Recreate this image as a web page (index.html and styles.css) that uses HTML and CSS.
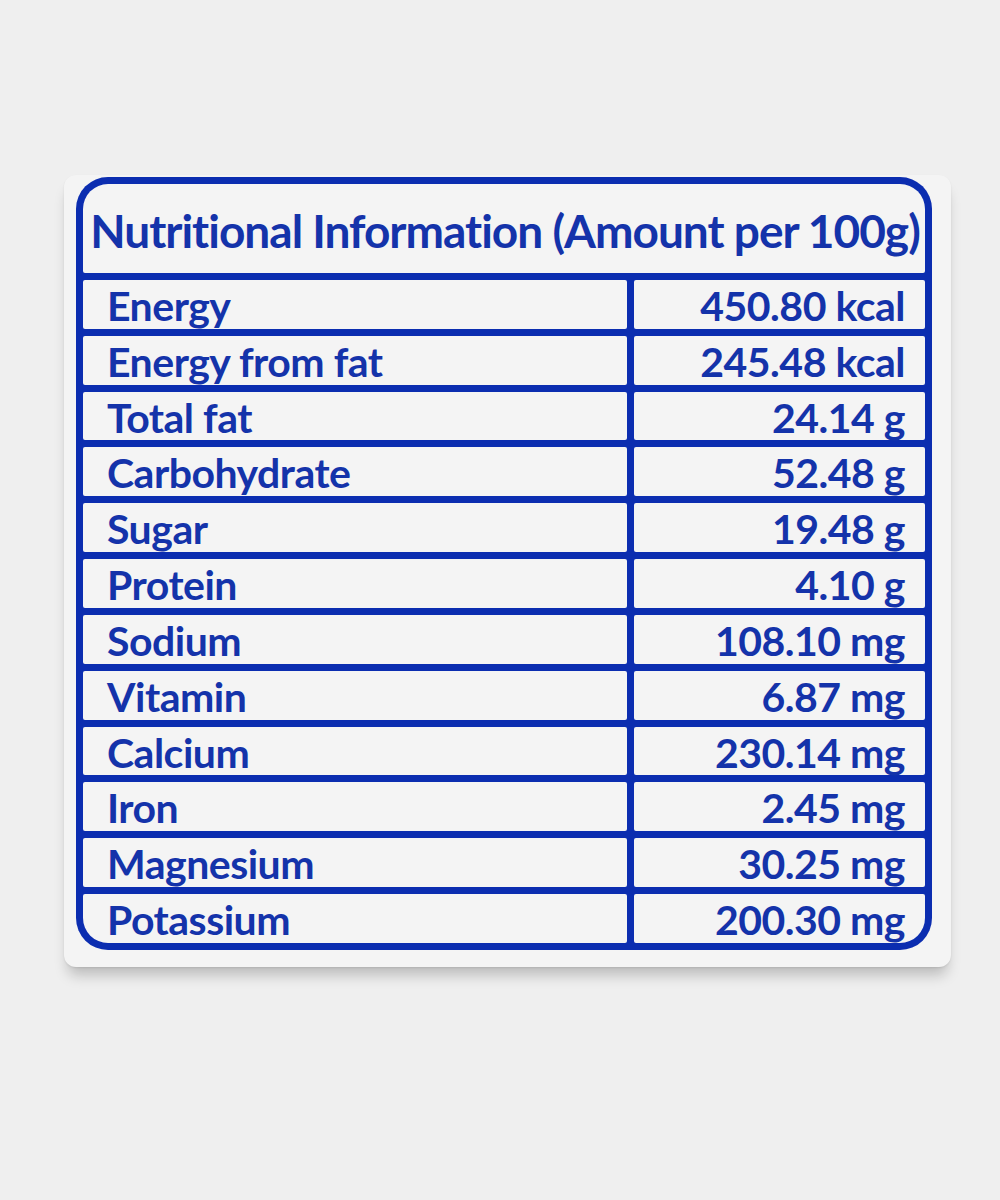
FILE: index.html
```html
<!DOCTYPE html>
<html lang="en">
<head>
<meta charset="utf-8">
<title>Nutritional Information</title>
<link rel="stylesheet" href="styles.css">
</head>
<body>
<main class="stage">
  <section class="card">
    <div class="label">
      <h1 class="title">Nutritional Information (Amount per 100g)</h1>
      <div class="cell name">Energy</div><div class="cell value">450.80 kcal</div>
      <div class="cell name">Energy from fat</div><div class="cell value">245.48 kcal</div>
      <div class="cell name">Total fat</div><div class="cell value">24.14 g</div>
      <div class="cell name">Carbohydrate</div><div class="cell value">52.48 g</div>
      <div class="cell name">Sugar</div><div class="cell value">19.48 g</div>
      <div class="cell name">Protein</div><div class="cell value">4.10 g</div>
      <div class="cell name">Sodium</div><div class="cell value">108.10 mg</div>
      <div class="cell name">Vitamin</div><div class="cell value">6.87 mg</div>
      <div class="cell name">Calcium</div><div class="cell value">230.14 mg</div>
      <div class="cell name">Iron</div><div class="cell value">2.45 mg</div>
      <div class="cell name">Magnesium</div><div class="cell value">30.25 mg</div>
      <div class="cell name last-left">Potassium</div><div class="cell value last-right">200.30 mg</div>
    </div>
  </section>
</main>
</body>
</html>
```

FILE: styles.css
```css
html, body {
  margin: 0;
  padding: 0;
  background: #efefef;
}

body {
  width: 1000px;
  height: 1200px;
  font-family: Lato, "Open Sans", sans-serif;
}

.stage {
  padding: 175px 0 0 64px;
  display: flex;
  align-items: flex-start;
}

.card {
  width: 887px;
  height: 792px;
  box-sizing: border-box;
  padding: 2px 19px 17px 12px;
  background: #f4f4f4;
  border-radius: 12px;
  box-shadow: 0 12px 14px -4px rgba(0, 0, 0, 0.22), 0 1px 2px rgba(0, 0, 0, 0.08);
}

.label {
  height: 773px;
  box-sizing: border-box;
  background: #0b2db0;
  border-radius: 32px;
  padding: 7px;
  display: grid;
  grid-template-columns: 544px minmax(0, 1fr);
  grid-template-rows: 89px repeat(12, minmax(0, 1fr));
  gap: 7px;
}

.title {
  grid-column: 1 / -1;
  margin: 0;
  min-height: 0;
  background: #f4f4f4;
  border-radius: 25px 25px 2px 2px;
  display: flex;
  align-items: center;
  justify-content: center;
  padding: 4px 0 0 2px;
  color: #1433aa;
  font-size: 46px;
  line-height: 1.2;
  font-weight: 700;
  letter-spacing: -1px;
  white-space: nowrap;
}

.cell {
  min-height: 0;
  background: #f4f4f4;
  border-radius: 2px;
  display: flex;
  align-items: center;
  color: #1433aa;
  font-size: 41px;
  line-height: 1.15;
  font-weight: 700;
  letter-spacing: -0.5px;
  white-space: nowrap;
  padding-top: 2px;
}

.name {
  padding-left: 24px;
}

.value {
  justify-content: flex-end;
  padding-right: 20px;
}

.last-left {
  border-bottom-left-radius: 25px;
}

.last-right {
  border-bottom-right-radius: 25px;
}
```
